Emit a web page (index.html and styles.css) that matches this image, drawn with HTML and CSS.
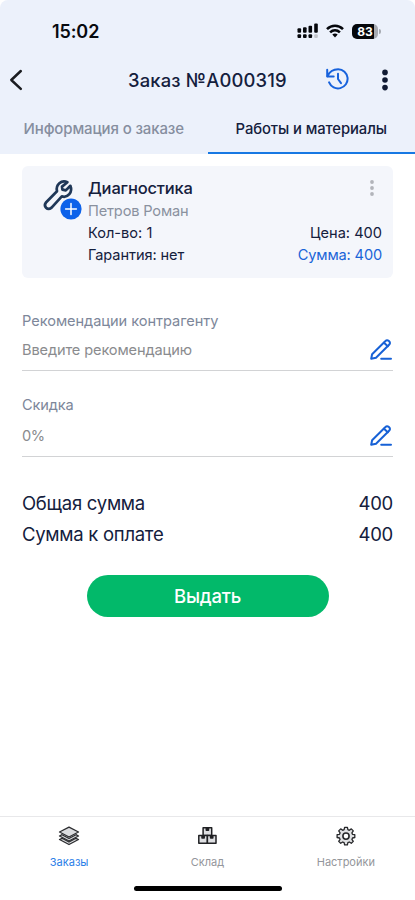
FILE: index.html
```html
<!DOCTYPE html>
<html lang="ru">
<head>
<meta charset="utf-8">
<meta name="viewport" content="width=device-width, initial-scale=1">
<title>Заказ</title>
<link rel="stylesheet" href="styles.css">
</head>
<body>
<div class="screen">
  <header class="top">
    <div class="status">
      <span class="clock">15:02</span>
      <div class="status-icons">
        <svg class="signal" width="22" height="16" viewBox="0 0 22 16">
          <g fill="#05070b"><rect x="0.5" y="5.3" width="3.6" height="4.5" rx="1"/><rect x="6" y="4.3" width="3.6" height="5.5" rx="1"/><rect x="11.5" y="2.8" width="3.6" height="7" rx="1"/><rect x="17.2" y="0.5" width="3.6" height="9.3" rx="1"/><rect x="0.5" y="11.3" width="3.6" height="3.7" rx="1"/><rect x="6" y="11.3" width="3.6" height="3.7" rx="1"/><rect x="11.5" y="11.3" width="3.6" height="3.7" rx="1"/></g>
          <rect x="17.2" y="11.3" width="3.6" height="3.7" rx="1" fill="#c3c6cc"/>
        </svg>
        <svg class="wifi" width="18" height="14" viewBox="0 0 18 14" fill="none" stroke="#05070b" stroke-width="2.6">
          <path d="M1 5.1C5.6.7 12.4.7 17 5.1"/><path d="M4.1 8.4c2.9-2.7 6.9-2.7 9.8 0"/><path d="M6.3 10.6c1.6-1.5 3.8-1.5 5.4 0L9 13.5z" fill="#05070b" stroke="none"/>
        </svg>
        <span class="battery">83</span><span class="battery-tip"></span>
      </div>
    </div>
    <div class="nav">
      <svg class="back" width="14" height="22" viewBox="0 0 14 22" fill="none" stroke="#1b1d21" stroke-width="2.5" stroke-linecap="round" stroke-linejoin="round"><path d="M11.8 2 2.3 11l9.5 8.8"/></svg>
      <h1 class="title">Заказ №A000319</h1>
      <svg class="history" width="24" height="22" viewBox="0 0 24 22" fill="none" stroke="#1762dc" stroke-width="2" stroke-linecap="round" stroke-linejoin="round"><path d="M1.2 1.8v6.6h6.5"/><path d="M1.6 8.2C3.4 3.7 7.4 1.2 12.2 1.2a9.6 9.6 0 1 1-9.1 13.2"/><path d="M12 5.8V11l3 4.2"/></svg>
      <svg class="menu" width="6" height="22" viewBox="0 0 6 22" fill="#101a33"><circle cx="3" cy="3.4" r="2.8"/><circle cx="3" cy="11" r="2.8"/><circle cx="3" cy="18.6" r="2.8"/></svg>
    </div>
    <nav class="tabs">
      <span class="tab"><span class="tab-info">Информация о заказе</span></span>
      <span class="tab tab-active"><span class="tab-works">Работы и материалы</span></span>
    </nav>
  </header>

  <main class="content">
    <section class="card">
      <div class="tool">
        <svg width="44" height="44" viewBox="0 0 44 44" fill="none">
          <path d="M26.4 5.2C20.4 2.4 14.4 7.8 16 14.2L5.2 25.2C1.8 29.4 6.4 33.8 10.6 30.6L20.8 19.4C26.8 21.2 32 15.2 29.4 8.8L24.8 13.4 21.4 12.6 21 9.6z" stroke="#203858" stroke-width="2.7" stroke-linejoin="round"/>
          <circle cx="30" cy="32" r="10.6" fill="#0d62ea"/>
          <path d="M30 26.6v10.8M24.6 32h10.8" stroke="#fff" stroke-width="1.5" stroke-linecap="round"/>
        </svg>
      </div>
      <div class="card-body">
        <div class="row row-name"><span class="name">Диагностика</span>
          <svg class="dots" width="4" height="16" viewBox="0 0 4 16" fill="#b2b4ba"><circle cx="2" cy="2" r="1.9"/><circle cx="2" cy="8" r="1.9"/><circle cx="2" cy="14" r="1.9"/></svg>
        </div>
        <div class="row"><span class="person">Петров Роман</span></div>
        <div class="row"><span class="count">Кол-во: 1</span><span class="price">Цена: 400</span></div>
        <div class="row"><span class="warranty">Гарантия: нет</span><span class="sum">Сумма: 400</span></div>
      </div>
    </section>

    <section class="field field-note">
      <div class="label label-note">Рекомендации контрагенту</div>
      <div class="value"><span class="ph-note">Введите рекомендацию</span>
        <svg class="pen" width="24" height="22" viewBox="0 0 24 22" fill="none" stroke="#1761d6" stroke-width="2" stroke-linecap="round" stroke-linejoin="round"><path d="M2.2 19.8l.9-4.6L16.2 2.3a2.6 2.6 0 0 1 3.9 3.5L7 18.7z"/><path d="M15 3.7l3.8 3.5M12.2 19.7h9.8"/></svg>
      </div>
    </section>
    <section class="field field-sale">
      <div class="label label-sale">Скидка</div>
      <div class="value"><span class="ph-sale">0%</span>
        <svg class="pen" width="24" height="22" viewBox="0 0 24 22" fill="none" stroke="#1761d6" stroke-width="2" stroke-linecap="round" stroke-linejoin="round"><path d="M2.2 19.8l.9-4.6L16.2 2.3a2.6 2.6 0 0 1 3.9 3.5L7 18.7z"/><path d="M15 3.7l3.8 3.5M12.2 19.7h9.8"/></svg>
      </div>
    </section>

    <section class="totals">
      <div class="total"><span class="total-all">Общая сумма</span><span class="amount">400</span></div>
      <div class="total"><span class="total-due">Сумма к оплате</span><span class="amount">400</span></div>
    </section>
    <button class="issue" type="button"><span class="issue-text">Выдать</span></button>
  </main>

  <footer class="bottom">
    <div class="bar">
      <div class="item item-active">
        <svg width="22" height="20" viewBox="0 0 22 20" fill="#dcdde0" stroke="#2c2d30" stroke-width="1.3" stroke-linejoin="round"><path d="M1.5 13.5 11 18.5l9.5-5-2.5-1.2L11 16l-7-3.7z"/><path d="M1.5 10 11 15l9.5-5L18 8.7 11 12.5 4 8.7z"/><path d="M11 1.2 20.5 6 11 11 1.5 6z"/></svg>
        <span class="item-orders">Заказы</span>
      </div>
      <div class="item">
        <svg width="20" height="20" viewBox="0 0 20 20" fill="#dedfe2" stroke="#202124" stroke-width="1.5" stroke-linejoin="round"><rect x="6.1" y="1.8" width="8.6" height="7.6"/><rect x="1.8" y="9.6" width="8.6" height="7.6"/><rect x="10.4" y="9.6" width="8.6" height="7.6"/><path d="M9.3 1.8v2.4h2.2V1.8M5 9.6V12h2.2V9.6M13.6 9.6V12h2.2V9.6" fill="#202124"/></svg>
        <span class="item-stock">Склад</span>
      </div>
      <div class="item">
        <svg width="20" height="20" viewBox="0 0 20 20" fill="#e0e1e3" stroke="#26272a" stroke-width="1.3" stroke-linejoin="round"><path d="M8.6 1.3h2.8l.5 2.4 1.4.6 2-1.4 2 2-1.4 2 .6 1.4 2.3.4v2.8l-2.3.5-.6 1.4 1.4 2-2 1.9-2-1.3-1.4.6-.5 2.3H8.6l-.5-2.3-1.4-.6-2 1.3-2-1.9 1.4-2-.6-1.4-2.4-.5V8.7l2.4-.4.6-1.4-1.4-2 2-2 2 1.4 1.4-.6z"/><circle cx="10" cy="10.1" r="3.1" fill="#fff" stroke-width="1.6"/></svg>
        <span class="item-settings">Настройки</span>
      </div>
    </div>
    <div class="home"></div>
  </footer>
</div>
</body>
</html>
```
FILE: styles.css
```css
* { box-sizing: border-box; }
body { margin: 0; background: #fff; font-family: Inter, "Liberation Sans", sans-serif; color: #14203d; }
.screen { width: 415px; height: 900px; display: flex; flex-direction: column; overflow: hidden; }
.top { height: 154px; background: #ecf1fb; border-radius: 8px 8px 0 0; display: flex; flex-direction: column; flex-shrink: 0; }
.status { height: 60px; padding: 2px 34px 0 52px; display: flex; align-items: center; justify-content: space-between; }
.clock { font-size: 18px; font-weight: 600; color: #080a0f; letter-spacing: -0.1px; }
.status-icons { display: flex; align-items: center; }
.wifi { margin: 0 8px 0 7px; }
.battery { width: 26px; height: 15px; border-radius: 5px; background: linear-gradient(90deg, #05070b 83%, #a7abb2 83%); color: #fff; font-size: 12px; font-weight: 700; line-height: 15px; text-align: center; }
.battery-tip { width: 2px; height: 5px; margin-left: 1px; border-radius: 0 2px 2px 0; background: #a7abb2; }
.nav { height: 40px; padding: 0 27px 0 9px; display: flex; align-items: center; }
.title { margin: 0 0 0 105px; width: 198px; font-size: 18.4px; font-weight: 500; letter-spacing: 0.18px; white-space: nowrap; }
.history { margin-top: -3px; }
.menu { margin-left: auto; }
.tabs { flex: 1; display: flex; }
.tab { flex: 1; display: flex; align-items: center; justify-content: center; padding-top: 4px; font-size: 15px; font-weight: 500; color: #868e9f; border-bottom: 2px solid transparent; white-space: nowrap; }
.tab-active { color: #14203d; border-color: #1778e3; padding-top: 5px; }
.tab-info { letter-spacing: -0.13px; }
.tab-works { font-size: 14.8px; letter-spacing: -0.08px; }
.content { padding: 12px 22px 0; display: flex; flex-direction: column; flex: 1; }
.card { height: 112px; padding: 11px 11px 0 19px; border-radius: 6px; background: #f4f6fb; display: flex; }
.tool { width: 47px; height: 44px; flex-shrink: 0; }
.card-body { flex: 1; font-size: 14.6px; }
.row { height: 22.2px; display: flex; justify-content: space-between; align-items: center; line-height: 22px; white-space: nowrap; }
.row-name { height: 23px; }
.name { margin-top: -1px; font-size: 16.5px; font-weight: 500; letter-spacing: -0.16px; }
.dots { margin: -2px 8.5px 0 0; }
.person { color: #8a919f; letter-spacing: -0.17px; }
.count, .price { letter-spacing: 0; }
.warranty { letter-spacing: -0.1px; }
.sum { color: #1964d8; letter-spacing: -0.15px; }
.field { display: flex; flex-direction: column; border-bottom: 1px solid #d2d3d5; font-size: 14.6px; }
.field-note { margin-top: 33px; height: 60px; }
.field-sale { margin-top: 24px; height: 62px; }
.label { line-height: 20px; color: #7d879a; }
.label-note { letter-spacing: -0.05px; }
.label-sale, .ph-note { letter-spacing: -0.13px; }
.ph-sale { letter-spacing: -0.4px; }
.value { height: 38px; display: flex; align-items: center; justify-content: space-between; color: #8a8b8e; }
.field-sale .value { height: 42px; }
.totals { margin-top: 30px; font-size: 18.5px; }
.total { height: 31px; display: flex; align-items: center; justify-content: space-between; }
.total-all, .total-due { letter-spacing: -0.28px; }
.amount { letter-spacing: -0.3px; }
.issue { width: 242px; height: 42px; margin: 26px auto 0; padding: 0; border: 0; border-radius: 21px; background: #02b96a; color: #fff; font: 500 18.5px Inter, sans-serif; }
.issue-text { letter-spacing: -0.22px; }
.bottom { height: 84px; border-top: 1px solid #e8e8ea; flex-shrink: 0; }
.bar { height: 69px; display: flex; }
.item { flex: 1; display: flex; flex-direction: column; align-items: center; padding-top: 9px; font-size: 11px; color: #94969b; }
.item span { margin-top: 8px; line-height: 16px; }
.item-active { color: #2b80e8; }
.home { width: 148px; height: 5px; margin: 0 auto; border-radius: 3px; background: #000; }
```
